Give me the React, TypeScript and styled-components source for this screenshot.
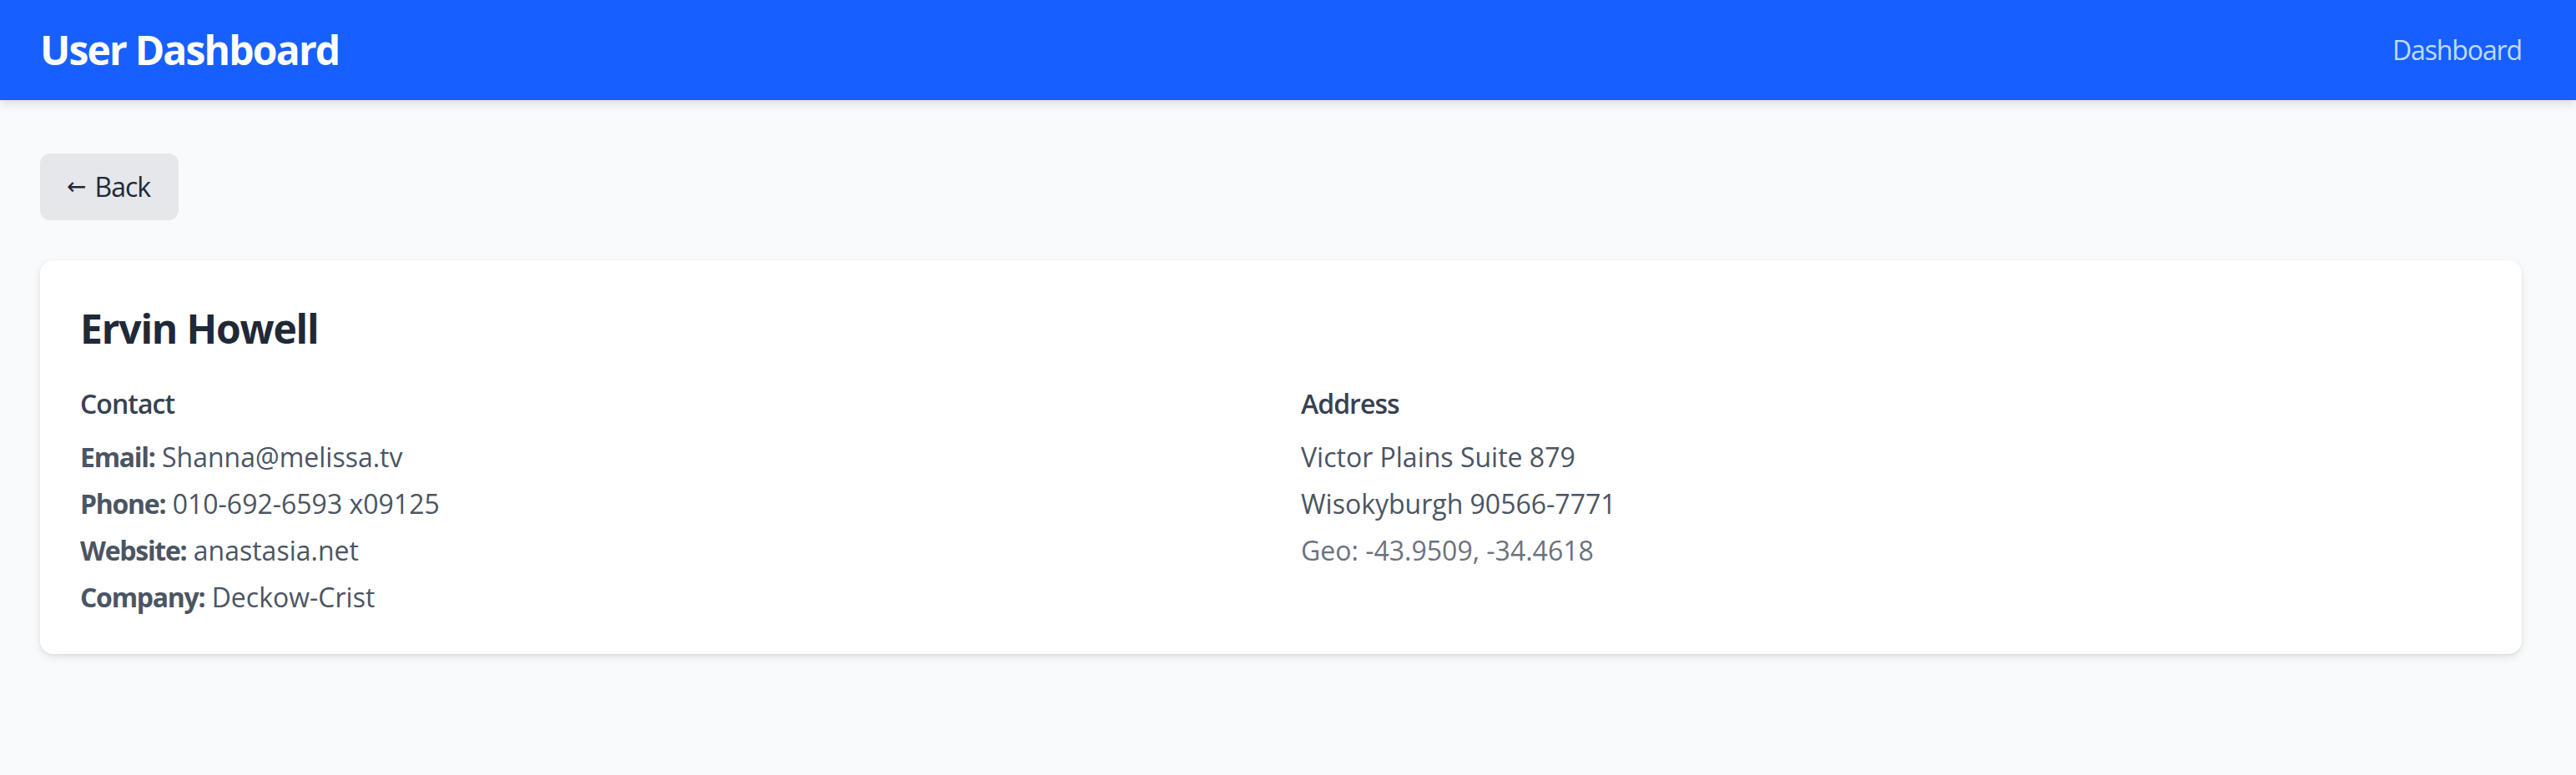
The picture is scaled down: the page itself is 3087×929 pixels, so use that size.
import React from "react";
import styled, { createGlobalStyle } from "styled-components";

const GlobalStyle = createGlobalStyle`
  * { box-sizing: border-box; }
  html, body { margin: 0; padding: 0; }
  body {
    background: #f9fafb;
    font-family: "Open Sans", "Noto Sans", "Liberation Sans", sans-serif;
    color: #1f2937;
  }
`;

const Page = styled.div`
  min-height: 929px;
  background: #f9fafb;
`;

const Header = styled.header`
  height: 120px;
  background: #1760ff;
  display: flex;
  align-items: center;
  justify-content: space-between;
  padding: 0 65px 0 48px;
  box-shadow: 0 4px 12px rgba(0, 0, 0, 0.12);
  position: relative;
`;

const Brand = styled.h1`
  margin: 0;
  font-size: 48px;
  font-weight: 700;
  letter-spacing: -0.038em;
  color: #ffffff;
  line-height: 64px;
`;

const NavLink = styled.a`
  font-size: 32px;
  color: #bfdbfe;
  text-decoration: none;
  line-height: 48px;
  letter-spacing: -0.035em;
`;

const Main = styled.main`
  padding: 64px 65px 64px 48px;
  display: flex;
  flex-direction: column;
  align-items: flex-start;
  gap: 48px;
`;

const BackButton = styled.button`
  height: 80px;
  padding: 0 34px 0 32px;
  border: none;
  border-radius: 12px;
  background: #e5e7eb;
  color: #1f2937;
  font-family: inherit;
  font-size: 32px;
  line-height: 48px;
  letter-spacing: -0.03em;
  cursor: pointer;
  display: flex;
  align-items: center;
  gap: 10px;
`;

const Arrow = styled.span`
  font-family: "DejaVu Sans", sans-serif;
  font-size: 28px;
  letter-spacing: 0;
`;

const Card = styled.section`
  align-self: stretch;
  background: #ffffff;
  border-radius: 16px;
  padding: 50px 48px 44px;
  box-shadow: 0 2px 4px rgba(0, 0, 0, 0.06), 0 4px 12px rgba(0, 0, 0, 0.08);
`;

const Name = styled.h2`
  margin: 0 0 34px;
  font-size: 48px;
  line-height: 64px;
  font-weight: 700;
  letter-spacing: -0.025em;
  color: #1f2937;
`;

const Columns = styled.div`
  display: grid;
  grid-template-columns: 1fr 1fr;
  gap: 48px;
`;

const Column = styled.div`
  display: flex;
  flex-direction: column;
`;

const SectionTitle = styled.h3`
  margin: 0 0 16px;
  font-size: 32px;
  line-height: 48px;
  font-weight: 600;
  letter-spacing: -0.03em;
  color: #374151;
`;

const List = styled.div`
  display: flex;
  flex-direction: column;
  gap: 8px;
`;

const Line = styled.p<{ $muted?: boolean }>`
  margin: 0;
  font-size: 32px;
  line-height: 48px;
  color: ${(p) => (p.$muted ? "#6b7280" : "#4b5563")};
`;

const Label = styled.strong`
  font-weight: 700;
  letter-spacing: -0.04em;
`;

export default function App() {
  return (
    <Page>
      <GlobalStyle />
      <Header>
        <Brand>User Dashboard</Brand>
        <NavLink href="#">Dashboard</NavLink>
      </Header>
      <Main>
        <BackButton>
          <Arrow>←</Arrow>
          Back
        </BackButton>
        <Card>
          <Name>Ervin Howell</Name>
          <Columns>
            <Column>
              <SectionTitle>Contact</SectionTitle>
              <List>
                <Line><Label>Email:</Label> Shanna@melissa.tv</Line>
                <Line><Label>Phone:</Label> 010-692-6593 x09125</Line>
                <Line><Label>Website:</Label> anastasia.net</Line>
                <Line><Label>Company:</Label> Deckow-Crist</Line>
              </List>
            </Column>
            <Column>
              <SectionTitle>Address</SectionTitle>
              <List>
                <Line>Victor Plains Suite 879</Line>
                <Line>Wisokyburgh 90566-7771</Line>
                <Line $muted>Geo: -43.9509, -34.4618</Line>
              </List>
            </Column>
          </Columns>
        </Card>
      </Main>
    </Page>
  );
}
